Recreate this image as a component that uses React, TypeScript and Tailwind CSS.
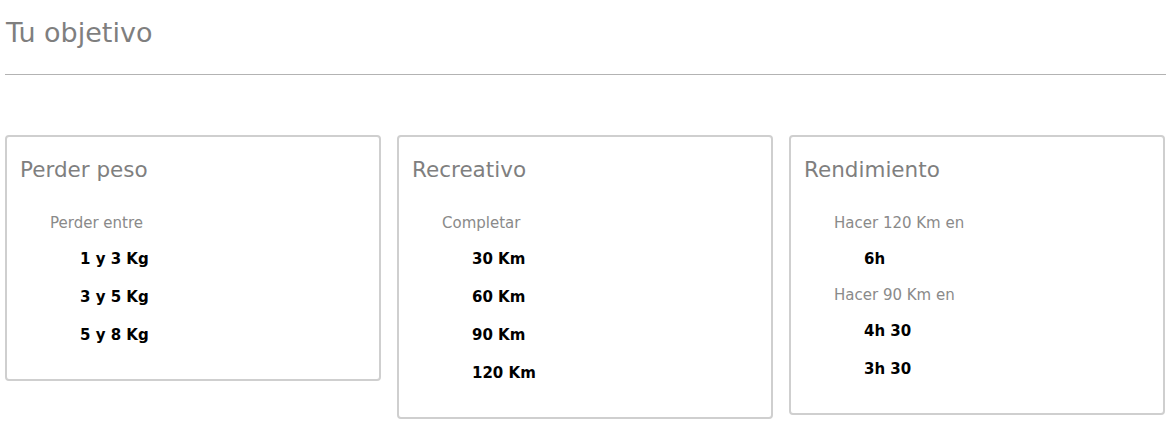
import React from 'react';

type Group = { label: string; items: string[] };
type Goal = { title: string; groups: Group[] };

const goals: Goal[] = [
  { title: 'Perder peso', groups: [{ label: 'Perder entre', items: ['1 y 3 Kg', '3 y 5 Kg', '5 y 8 Kg'] }] },
  { title: 'Recreativo', groups: [{ label: 'Completar', items: ['30 Km', '60 Km', '90 Km', '120 Km'] }] },
  {
    title: 'Rendimiento',
    groups: [
      { label: 'Hacer 120 Km en', items: ['6h'] },
      { label: 'Hacer 90 Km en', items: ['4h 30', '3h 30'] },
    ],
  },
];

const GoalCard: React.FC<{ goal: Goal }> = ({ goal }) => (
  <div className="flex-1 border-2 border-[#cfcfcf] rounded-[4px] bg-white pl-[13px] pt-[16px] pb-[25px]">
    <h3 className="text-[21.5px] leading-[34px] text-[#7f7f7f]">{goal.title}</h3>
    <div className="mt-[19px] pl-[30px]">
      {goal.groups.map(g => (
        <div key={g.label}>
          <p className="text-[15px] leading-[34px] text-[#8a8a8a]">{g.label}</p>
          {g.items.map(it => (
            <p key={it} className="pl-[30px] text-[15px] leading-[38px] font-bold text-black">{it}</p>
          ))}
        </div>
      ))}
    </div>
  </div>
);

export default function App() {
  return (
    <div className="bg-white min-h-screen px-[5px] pt-[13px]" style={{ fontFamily: 'Tahoma, "DejaVu Sans", sans-serif' }}>
      <h1 className="pl-[1px] text-[27px] leading-[40px] text-[#7f7f7f]">Tu objetivo</h1>
      <div className="mt-[21px] border-t border-[#b3b3b3] w-[1161px]" />
      <div className="mt-[60px] flex items-start gap-[16px] w-[1160px]">
        {goals.map(g => (
          <GoalCard key={g.title} goal={g} />
        ))}
      </div>
    </div>
  );
}
